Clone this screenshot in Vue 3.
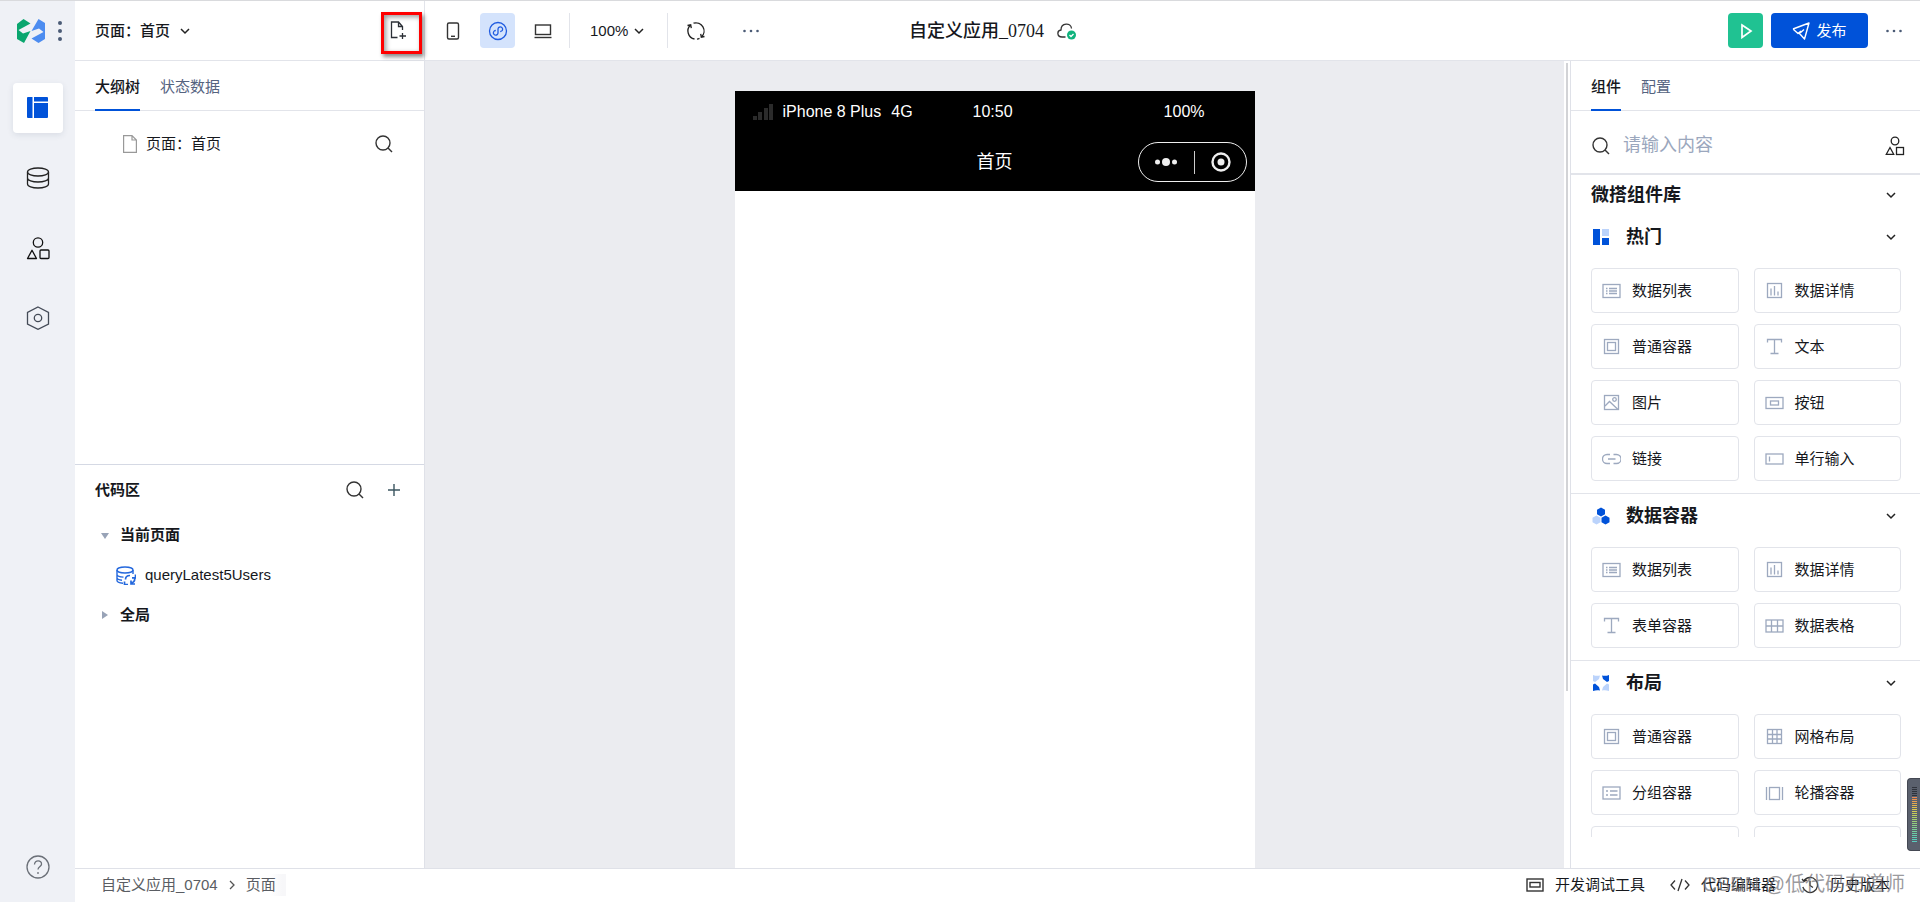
<script setup>
import { ref } from 'vue'

const keyword = ref('')

const icons = {
  list: '<rect x="1" y="3.5" width="17" height="13"/><path d="M4 7.5h1.5M7 7.5h8M4 10h1.5M7 10h8M4 12.5h1.5M7 12.5h8"/>',
  chart: '<rect x="2.5" y="2.5" width="14" height="14"/><path d="M6 7.5v7M9.5 5v9.500M13 10.500v4"/>',
  box: '<rect x="2.5" y="2.5" width="14" height="14"/><rect x="5.500" y="5.500" width="8" height="8"/>',
  text: '<path d="M2.500 5.500v-3h14v3M9.500 2.500v14M5.500 16.500h8"/>',
  image: '<rect x="2.5" y="2.5" width="14" height="14"/><circle cx="12.500" cy="6.500" r="1.800"/><path d="M3 13l4.500-4.500 8.500 8"/>',
  button: '<rect x="1" y="4.500" width="17" height="11"/><rect x="5.500" y="8" width="8" height="4"/>',
  link: '<path d="M8 5.500H5a4.500 4.500 0 0 0 0 9h3M11.500 5.500h3a4.500 4.500 0 0 1 0 9h-3M6 10h7.500"/>',
  input: '<rect x="1" y="5" width="17" height="10"/><path d="M4.500 7.500v5"/>',
  table: '<rect x="1" y="4" width="17" height="12"/><path d="M1 10h17M6.500 4v12M12.500 4v12"/>',
  grid: '<rect x="2.5" y="2.5" width="14" height="14"/><path d="M2.500 7.500h14M2.500 12h14M7.500 2.500v14M12 2.500v14"/>',
  group: '<rect x="1" y="4" width="17" height="12"/><path d="M4 8h2M8 8h7.500M4 12h2M8 12h7.500"/>',
  carousel: '<rect x="4.500" y="4.500" width="10" height="12"/><path d="M1.500 4v13M17.500 4v13"/>'
}

const marks = {
  hot: '<path fill="#0052d9" d="M1 1h7v16H1zM10 10h7v7h-7z"/><path fill="#bbd3fb" d="M10 1h7v7h-7z"/>',
  data: '<path fill="#0052d9" d="M9 .500l4 2.200v4.600L9 9.500 5 7.300V2.700zM13.500 8.500l4 2.200v4.600l-4 2.200-4-2.200v-4.600z"/><path fill="#bbd3fb" d="M4.500 8.500l4 2.200v4.600l-4 2.200-4-2.200v-4.600z"/>',
  layout: '<path fill="#bbd3fb" d="M1 1c2.500 1 5 1 7 .5L7 5 3 8 1 7zM17 17c-2.500-1-5-1-7-.5l1-3.500 4-3.500 2 1z"/><path fill="#0052d9" d="M17 1c-2.500 1-5 1-7 .5L11 5l4 3 2-1zM1 17c2.500-1 5-1 7-.5L7 13 3 9.500l-2 1z"/>'
}

const groups = [
  {
    title: '热门', mark: 'hot', items: [
      ['数据列表', 'list'], ['数据详情', 'chart'],
      ['普通容器', 'box'], ['文本', 'text'],
      ['图片', 'image'], ['按钮', 'button'],
      ['链接', 'link'], ['单行输入', 'input']
    ]
  },
  {
    title: '数据容器', mark: 'data', items: [
      ['数据列表', 'list'], ['数据详情', 'chart'],
      ['表单容器', 'text'], ['数据表格', 'table']
    ]
  },
  {
    title: '布局', mark: 'layout', items: [
      ['普通容器', 'box'], ['网格布局', 'grid'],
      ['分组容器', 'group'], ['轮播容器', 'carousel'],
      ['', ''], ['', '']
    ]
  }
]

const levels = [
  '#2f333c', '#2f333c', '#2f333c', '#2f333c', '#2f333c', '#f08a50', '#ec9450', '#e8a050', '#e4ab4e',
  '#e2b64e', '#dfc04e', '#dbc850', '#d3cc54', '#c8ce58', '#bccf5e', '#b0cf66', '#a6d06e', '#9cd076',
  '#94d07e', '#8cd086', '#84d08e', '#7cd096', '#74d09e', '#6ccfa6', '#66cfae', '#60ceb4', '#5cceba',
  '#58cdc0'
]
</script>

<template>
  <div class="app">
    <aside class="nav">
      <div class="brand">
        <svg class="logo" width="28" height="24" viewBox="0 0 28 24">
          <path fill="#0aa66e" d="M0 5L6.500 0 13.500 4.500 1.500 11 6 14.500 13.500 12 7 24 0 20z" />
          <path fill="#4c8cf0" d="M21.500 0L28 4v16l-6.500 4-7-4.500L26.500 13 22 9.500 14.500 12z" />
        </svg>
        <button class="plain" aria-label="更多">
          <svg width="6" height="22" viewBox="0 0 6 22" fill="#4b5b76"><circle cx="3" cy="3" r="2" /><circle cx="3" cy="11" r="2" /><circle cx="3" cy="19" r="2" /></svg>
        </button>
      </div>
      <nav class="nav-list">
        <button class="nav-item active" aria-label="页面设计">
          <svg width="24" height="24" viewBox="0 0 24 24" fill="#0052d9"><path d="M2 1h4.500v21H2a1 1 0 0 1-1-1V2a1 1 0 0 1 1-1zM8 1h13a1 1 0 0 1 1 1v3.500H8zM8 7h14v14a1 1 0 0 1-1 1H8z" /></svg>
        </button>
        <button class="nav-item" aria-label="数据源">
          <svg width="24" height="24" viewBox="0 0 24 24" fill="none" stroke="#222" stroke-width="1.300"><ellipse cx="12" cy="6" rx="10.500" ry="4" /><path d="M1.500 6v12c0 2.200 4.700 4 10.500 4s10.500-1.800 10.500-4V6M1.500 12c0 2.200 4.700 4 10.500 4s10.500-1.800 10.500-4" /></svg>
        </button>
        <button class="nav-item" aria-label="组件库">
          <svg width="24" height="24" viewBox="0 0 24 24" fill="none" stroke="#111" stroke-width="1.300" stroke-linejoin="round"><circle cx="12" cy="6.500" r="4.700" /><rect x="14" y="14" width="9" height="8.500" rx="1" /><path d="M6 14.300L10.500 22.500h-9z" /></svg>
        </button>
        <button class="nav-item" aria-label="设置">
          <svg width="24" height="24" viewBox="0 0 24 24" fill="none" stroke="#444b57" stroke-width="1.300"><path d="M12 1l10.500 5.500v11.500L12 23.300 1.500 18V6.500z" /><circle cx="12" cy="12" r="3.700" /></svg>
        </button>
      </nav>
      <button class="nav-item help" aria-label="帮助">
        <svg width="24" height="24" viewBox="0 0 24 24" fill="none" stroke="#6b7078" stroke-width="1.300"><circle cx="12" cy="12" r="11" /><path d="M8.500 9.500C8.500 4.500 16 5 15.500 9.300c-.2 2-3.500 2.500-3.500 5.200M12 17v2" /></svg>
      </button>
    </aside>

    <div class="main">
      <header class="topbar">
        <div class="tools">
          <div class="page-bar">
            <label class="picker strong">
              <select aria-label="页面"><option>页面：首页</option></select>
              <svg width="10" height="8" viewBox="0 0 10 8" class="chev"><path d="M1 2l4 4 4-4" /></svg>
            </label>
            <button class="new-page" aria-label="新建页面">
              <svg width="18" height="18" viewBox="0 0 18 18" fill="none" stroke="#2b2f36" stroke-width="1.300"><path d="M7.500 16.500H1.500V1h7l4 4.500V9M8.500 1v4.500h4M12.500 12v6M9.500 15H16" /></svg>
            </button>
          </div>
          <div class="devices">
            <button class="tile" aria-label="手机">
              <svg width="20" height="20" viewBox="0 0 20 20" fill="none" stroke="#333" stroke-width="1.400"><rect x="4.500" y="2" width="11" height="16" rx="1.500" /><path d="M8 15.300h4" /></svg>
            </button>
            <button class="tile on" aria-label="小程序">
              <svg width="20" height="20" viewBox="0 0 20 20" fill="none" stroke="#1f5be0" stroke-width="1.300"><circle cx="10" cy="10" r="8.500" /><path d="M7.800 9.500a2.300 2.300 0 1 0 2.200 2.300V8.200a2.300 2.300 0 1 1 2.200 2.300" /></svg>
            </button>
            <button class="tile" aria-label="电脑">
              <svg width="20" height="20" viewBox="0 0 20 20" fill="none" stroke="#333" stroke-width="1.400"><rect x="2.500" y="4" width="15" height="9.500" /><path d="M1.500 16.500h17" /></svg>
            </button>
          </div>
          <label class="picker zoom">
            <select aria-label="缩放"><option>100%</option></select>
            <svg width="10" height="8" viewBox="0 0 10 8" class="chev"><path d="M1 2l4 4 4-4" /></svg>
          </label>
          <div class="extra">
            <button class="tile" aria-label="刷新">
              <svg width="20" height="20" viewBox="0 0 20 20" fill="none" stroke="#222" stroke-width="1.300"><path d="M8.500 18A8.200 8.200 0 0 1 4.500 4M1.500 4.500l3.200-.7.6 3.400M7.500 2.200A8.200 8.200 0 0 1 15.500 16M18.500 15.500l-3.200.7-.6-3.400M13.500 17.300a8 8 0 0 1-2.500.8" /></svg>
            </button>
            <button class="tile" aria-label="更多操作">
              <svg width="18" height="4" viewBox="0 0 18 4" fill="#4b5b76"><circle cx="2.500" cy="2" r="1.300" /><circle cx="9" cy="2" r="1.300" /><circle cx="15.500" cy="2" r="1.300" /></svg>
            </button>
          </div>
        </div>
        <div class="title">
          <h1>自定义应用_0704</h1>
          <svg width="20" height="18" viewBox="0 0 20 18" fill="none" stroke="#333" stroke-width="1.300"><path d="M8.500 15H5C-.3 14.800-.3 8.500 4 8 4 .5 14 .5 14.500 6.500" /><circle cx="14.500" cy="13" r="4.500" fill="#0fb37d" stroke="none" /><path stroke="#fff" d="M12.500 13l1.500 1.500 2.500-2.500" /></svg>
        </div>
        <div class="actions">
          <button class="run" aria-label="预览">
            <svg width="14" height="16" viewBox="0 0 14 16" fill="none" stroke="#fff" stroke-width="1.700"><path d="M3 2l9 6-9 6.500z" /></svg>
          </button>
          <button class="publish">
            <svg width="18" height="18" viewBox="0 0 18 18" fill="none" stroke="#fff" stroke-width="1.400" stroke-linejoin="round"><path d="M1 7L17 1l-4.500 16-5-5.500L12 7.500M1 7l5 4.500 3-2.500" /></svg>
            <span>发布</span>
          </button>
          <button class="tile" aria-label="更多设置">
            <svg width="18" height="4" viewBox="0 0 18 4" fill="#4b5b76"><circle cx="2.500" cy="2" r="1.300" /><circle cx="9" cy="2" r="1.300" /><circle cx="15.500" cy="2" r="1.300" /></svg>
          </button>
        </div>
      </header>

      <div class="workspace">
        <section class="left">
          <div class="outline">
            <div class="tabs">
              <button class="tab current">大纲树</button>
              <button class="tab">状态数据</button>
            </div>
            <div class="tree-page">
              <svg width="14" height="18" viewBox="0 0 14 18" fill="none" stroke="#999" stroke-width="1.200"><path d="M.6.600h8.400l4.400 4.400v12.400H.6zM9 .600v4.400h4.400" /></svg>
              <span>页面：首页</span>
              <button class="plain" aria-label="搜索">
                <svg width="18" height="18" viewBox="0 0 18 18" class="search"><circle cx="8" cy="8" r="7" /><path d="M13 13l4 4" /></svg>
              </button>
            </div>
          </div>
          <div class="code">
            <div class="code-head">
              <h2>代码区</h2>
              <button class="plain" aria-label="搜索代码">
                <svg width="18" height="18" viewBox="0 0 18 18" class="search"><circle cx="8" cy="8" r="7" /><path d="M13 13l4 4" /></svg>
              </button>
              <button class="plain" aria-label="新建">
                <svg width="12" height="12" viewBox="0 0 12 12" stroke="#3b5560" stroke-width="1.400"><path d="M0 6h12M6 0v12" /></svg>
              </button>
            </div>
            <button class="node">
              <svg width="8" height="8" viewBox="0 0 8 8" fill="#98a3b7"><path d="M0 2h8L4 8z" /></svg>当前页面
            </button>
            <button class="leaf">
              <svg width="20" height="20" viewBox="0 0 20 20" fill="none" stroke="#2468dd" stroke-width="1.400"><ellipse cx="9" cy="5" rx="8" ry="3" /><path d="M1 5v10.500c0 1.400 2.500 2.500 6 2.700M17 5v4M1 9.500c0 1.500 3 2.500 6.500 2.600M1 13c.5 1.300 2.500 2 5 2.200" /><path stroke-width="1.700" d="M9.500 14.500c0-2.500 2-4 4.500-4M8.500 16.500v3h3.500M18.800 13.500c0 3-2 4.500-4.500 5M19.500 9.500v3.300h-3.500M15 15.500v3.500h4" /></svg>queryLatest5Users
            </button>
            <button class="node">
              <svg width="8" height="8" viewBox="0 0 8 8" fill="#98a3b7"><path d="M1 0l6 4-6 4z" /></svg>全局
            </button>
          </div>
        </section>

        <main class="canvas">
          <div class="phone">
            <div class="phone-head">
              <div class="status">
                <div class="carrier">
                  <svg width="20" height="16" viewBox="0 0 20 16" fill="#2b2b2b"><path d="M0 12h4v4H0zM5 8h4v8H5zM11 4h4v12h-4zM16 0h4v16h-4z" /></svg>
                  <span>iPhone 8 Plus</span><span>4G</span>
                </div>
                <span>10:50</span>
                <span class="battery">100%</span>
              </div>
              <div class="phone-nav">
                <span class="phone-title">首页</span>
                <div class="capsule">
                  <svg width="24" height="10" viewBox="0 0 24 10" fill="#eee"><circle cx="3.500" cy="5" r="2.500" /><circle cx="12" cy="5" r="4" /><circle cx="20.500" cy="5" r="2.500" /></svg>
                  <i></i>
                  <svg width="20" height="20" viewBox="0 0 20 20"><circle cx="10" cy="10" r="8.500" fill="none" stroke="#eee" stroke-width="2.400" /><circle cx="10" cy="10" r="3.500" fill="#eee" /></svg>
                </div>
              </div>
            </div>
          </div>
        </main>
        <div class="gutter"><i></i></div>

        <section class="right">
          <div class="tabs">
            <button class="tab current">组件</button>
            <button class="tab">配置</button>
          </div>
          <div class="filter">
            <svg width="18" height="18" viewBox="0 0 18 18" class="search"><circle cx="8" cy="8" r="7" /><path d="M13 13l4 4" /></svg>
            <input v-model="keyword" type="text" placeholder="请输入内容" aria-label="搜索组件">
            <button class="plain" aria-label="组件分类">
              <svg width="20" height="20" viewBox="0 0 20 20" fill="none" stroke="#222" stroke-width="1.300"><circle cx="10" cy="5" r="3.800" /><rect x="11.500" y="11.500" width="7" height="7" /><path d="M5 11.500L8.700 18.300H1.300z" /></svg>
            </button>
          </div>
          <div class="library">
            <button class="lib-title">微搭组件库
              <svg width="10" height="8" viewBox="0 0 10 8" class="chev"><path d="M1 2l4 4 4-4" /></svg>
            </button>
            <div v-for="g in groups" :key="g.title" class="group">
              <button class="group-title">
                <svg width="18" height="18" viewBox="0 0 18 18" v-html="marks[g.mark]"></svg>
                <span>{{ g.title }}</span>
                <svg width="10" height="8" viewBox="0 0 10 8" class="chev"><path d="M1 2l4 4 4-4" /></svg>
              </button>
              <div class="cards">
                <button v-for="(item, i) in g.items" :key="i" class="card">
                  <svg width="19" height="19" viewBox="0 0 19 19" fill="none" stroke="#9da9bf" stroke-width="1.300" v-html="icons[item[1]]"></svg>
                  <span>{{ item[0] }}</span>
                </button>
              </div>
            </div>
          </div>
        </section>
      </div>

      <footer class="footer">
        <div class="crumbs">
          <a href="#">自定义应用_0704</a>
          <svg width="6" height="10" viewBox="0 0 6 10" fill="none" stroke="#555" stroke-width="1.300"><path d="M1 1l4 4-4 4" /></svg>
          <a href="#" class="here">页面</a>
        </div>
        <div class="utils">
          <button class="util">
            <svg width="18" height="14" viewBox="0 0 18 14" fill="none" stroke="#333" stroke-width="1.400"><rect x="1" y="1" width="16" height="12" /><rect x="4" y="4.500" width="10" height="4.500" /></svg>开发调试工具
          </button>
          <button class="util">
            <svg width="20" height="14" viewBox="0 0 20 14" fill="none" stroke="#333" stroke-width="1.300"><path d="M5 2.500L1 7l4 4.500M15 2.500L19 7l-4 4.500M12 1L8 13" /></svg>代码编辑器
          </button>
          <button class="util">
            <svg width="18" height="18" viewBox="0 0 18 18" fill="none" stroke="#333" stroke-width="1.300"><path d="M3 4.500A7.500 7.500 0 1 1 1.800 11M1 3l2 2.500L6 4M9 5v4.500l3 2" /></svg>历史版本
          </button>
        </div>
      </footer>
    </div>

    <div class="watermark">CSDN @低代码布道师</div>
    <div class="meter"><i v-for="(c, i) in levels" :key="i" :style="{ background: c }"></i></div>
  </div>
</template>

<style>
body {
  background: #fff;
}
</style>

<style scoped>
.app {
  position: relative;
  box-sizing: border-box;
  display: flex;
  height: 100vh;
  overflow: hidden;
  border-top: 1px solid #d9dadd;
  color: #16181d;
  font: 15px/20px "Liberation Sans", "Noto Sans CJK SC", sans-serif;
}
.app * {
  box-sizing: border-box;
}
button,
select,
input {
  margin: 0;
  padding: 0;
  border: 0;
  background: none;
  color: inherit;
  font: inherit;
}
svg {
  display: block;
  flex: none;
}
a {
  color: inherit;
  text-decoration: none;
}
.plain {
  display: flex;
}
.chev {
  fill: none;
  stroke: #222;
  stroke-width: 1.5;
}
.search {
  fill: none;
  stroke: #333;
  stroke-width: 1.4;
}
.nav {
  flex: none;
  display: flex;
  flex-direction: column;
  align-items: center;
  width: 75px;
  padding-bottom: 10px;
  background: #eff1f6;
}
.brand {
  display: flex;
  align-items: center;
  gap: 12px;
  height: 60px;
  padding-left: 4px;
}
.nav-list {
  display: flex;
  flex-direction: column;
  gap: 20px;
  padding-top: 22px;
}
.nav-item {
  display: flex;
  align-items: center;
  justify-content: center;
  width: 50px;
  height: 50px;
  border-radius: 4px;
}
.nav-item.active {
  background: #fff;
  box-shadow: 0 2px 6px rgba(30, 45, 80, 0.1);
}
.help {
  margin-top: auto;
}
.main {
  flex: 1;
  display: flex;
  flex-direction: column;
  min-width: 0;
}
.topbar {
  flex: none;
  display: flex;
  align-items: center;
  height: 60px;
  padding-right: 9px;
  border-bottom: 1px solid #e2e4ea;
}
.tools,
.actions {
  flex: 1;
  display: flex;
  align-items: center;
}
.tools {
  height: 100%;
}
.page-bar {
  display: flex;
  align-items: center;
  justify-content: space-between;
  width: 350px;
  height: 100%;
  padding: 4px 2px 0 20px;
  border-right: 1px solid #e2e4ea;
}
.picker {
  display: flex;
  align-items: center;
  gap: 8px;
}
.picker select {
  appearance: none;
}
.strong {
  gap: 9px;
  padding-bottom: 4px;
  font-weight: 500;
}
.new-page {
  display: flex;
  align-items: center;
  width: 41px;
  height: 42px;
  padding: 0 0 6px 6px;
  border: 3px solid #f00;
  box-shadow: 2px 3px 4px rgba(0, 0, 0, 0.45), inset 2px 2px 5px rgba(0, 0, 0, 0.4);
}
.devices {
  display: flex;
  gap: 10px;
  padding: 0 9px 0 10px;
}
.tile {
  display: flex;
  align-items: center;
  justify-content: center;
  width: 35px;
  height: 35px;
  border-radius: 4px;
}
.tile.on {
  background: #d4e3fc;
}
.zoom {
  gap: 5px;
  height: 35px;
  padding: 0 23px 0 20px;
  border: solid #e2e4ea;
  border-width: 0 1px;
}
.extra {
  display: flex;
  gap: 20px;
  padding-left: 10px;
}
.title {
  display: flex;
  align-items: center;
  gap: 13px;
}
h1 {
  margin: 0;
  font: 500 18px/24px "Liberation Serif", "Noto Sans CJK SC", serif;
}
.actions {
  justify-content: flex-end;
  gap: 8px;
}
.run,
.publish {
  display: flex;
  align-items: center;
  justify-content: center;
  gap: 6px;
  width: 35px;
  height: 35px;
  border-radius: 4px;
  background: #20c292;
  color: #fff;
}
.publish {
  width: 97px;
  background: #0052d9;
}
.workspace {
  flex: 1;
  display: flex;
  min-height: 0;
}
.left {
  flex: none;
  display: flex;
  flex-direction: column;
  width: 350px;
  border-right: 1px solid #dfe1e8;
}
.outline,
.code {
  flex: 1;
}
.tabs {
  display: flex;
  gap: 20px;
  height: 50px;
  padding: 0 20px;
  border-bottom: 1px solid #e2e4ea;
}
.tab {
  height: 50px;
  padding-top: 4px;
  border-bottom: 2px solid transparent;
  color: #55637f;
}
.tab.current {
  border-color: #0052d9;
  color: #16181d;
  font-weight: 500;
}
.tree-page {
  display: flex;
  align-items: center;
  gap: 9px;
  height: 66px;
  padding: 0 31px 0 48px;
}
.tree-page .plain {
  margin-left: auto;
}
.code {
  border-top: 1px solid #d5d9e4;
}
.code-head {
  display: flex;
  align-items: center;
  gap: 24px;
  height: 50px;
  padding: 0 24px 0 20px;
}
.code-head h2 {
  margin: 0 auto 0 0;
  font-size: 15px;
  font-weight: 700;
}
.node,
.leaf {
  display: flex;
  align-items: center;
  gap: 11px;
  width: 100%;
  height: 40px;
  padding-left: 26px;
  font-weight: 700;
}
.leaf {
  gap: 9px;
  padding-left: 41px;
  font-weight: 400;
}
.canvas {
  flex: 1;
  display: flex;
  justify-content: center;
  padding-top: 30px;
  background: #ebecf0;
}
.phone {
  width: 520px;
  background: #fff;
}
.phone-head {
  padding: 8px 8px 9px;
  background: #000;
  color: #fff;
}
.status,
.phone-nav {
  display: grid;
  grid-template-columns: 1fr auto 1fr;
  align-items: center;
}
.status {
  height: 25px;
  padding: 0 42px 0 10px;
  grid-template-columns: 220px auto 1fr;
  font-size: 16px;
}
.carrier {
  display: flex;
  align-items: center;
  gap: 10px;
}
.battery {
  text-align: right;
}
.phone-nav {
  padding-top: 18px;
}
.phone-title {
  grid-column: 2;
  font-size: 18px;
}
.capsule {
  justify-self: end;
  display: flex;
  align-items: center;
  justify-content: space-between;
  width: 109px;
  height: 40px;
  padding: 0 15px;
  border: 1px solid #eee;
  border-radius: 20px;
}
.capsule i {
  width: 1px;
  height: 23px;
  background: #ccc;
}
.gutter {
  flex: none;
  width: 6px;
  padding: 2px 2px 0;
  background: #fff;
}
.gutter i {
  display: block;
  height: 78%;
  background: #d2d3d6;
}
.right {
  flex: none;
  display: flex;
  flex-direction: column;
  width: 350px;
  border-left: 1px solid #dfe1e8;
}
.right .tabs {
  flex: none;
}
.filter {
  flex: none;
  display: flex;
  align-items: center;
  gap: 13px;
  height: 64px;
  padding: 7px 15px 0 21px;
  border-bottom: 2px solid #e2e4ea;
}
.filter input {
  flex: 1;
  min-width: 0;
  height: 30px;
  outline: 0;
  font-size: 18px;
}
.filter input::placeholder {
  color: #9ba7bd;
}
.library {
  flex: 1;
  min-height: 0;
  margin-bottom: 31px;
  overflow: hidden;
}
.lib-title,
.group-title {
  display: flex;
  align-items: center;
  width: 100%;
  height: 40px;
  padding: 0 24px 0 20px;
  font-size: 18px;
  font-weight: 700;
}
.group-title {
  gap: 16px;
  height: 44px;
  padding-left: 21px;
}
.lib-title .chev,
.group-title .chev {
  margin-left: auto;
}
.group {
  border-bottom: 1px solid #e2e4ea;
}
.cards {
  display: grid;
  grid-template-columns: 1fr 1fr;
  gap: 11px 15px;
  padding: 9px 19px 12px 20px;
}
.card {
  display: flex;
  align-items: center;
  gap: 11px;
  height: 45px;
  padding-left: 10px;
  border: 1px solid #e2e4ea;
  border-radius: 4px;
}
.footer {
  flex: none;
  display: flex;
  align-items: center;
  justify-content: space-between;
  height: 34px;
  padding: 0 30px 2px 26px;
  border-top: 1px solid #dfe1e8;
}
.crumbs,
.utils,
.util {
  display: flex;
  align-items: center;
}
.crumbs {
  gap: 11px;
  color: #5a5d63;
}
.here {
  padding: 1px 10px 1px 0;
  background: linear-gradient(90deg, #fff 60%, #f7f7f9 90%);
}
.utils {
  gap: 25px;
}
.util {
  gap: 11px;
}
.watermark {
  position: absolute;
  right: 15px;
  bottom: 4px;
  color: rgba(110, 110, 115, 0.7);
  font-size: 20px;
  line-height: 28px;
  pointer-events: none;
}
.meter {
  position: absolute;
  right: 0;
  bottom: 51px;
  display: flex;
  flex-direction: column;
  gap: 1px;
  width: 13px;
  padding: 8px 3px 8px 4px;
  border: solid #444853;
  border-width: 1px 0 1px 1px;
  border-radius: 4px 0 0 4px;
  background: #5a606d;
}
.meter i {
  height: 1px;
}
</style>
